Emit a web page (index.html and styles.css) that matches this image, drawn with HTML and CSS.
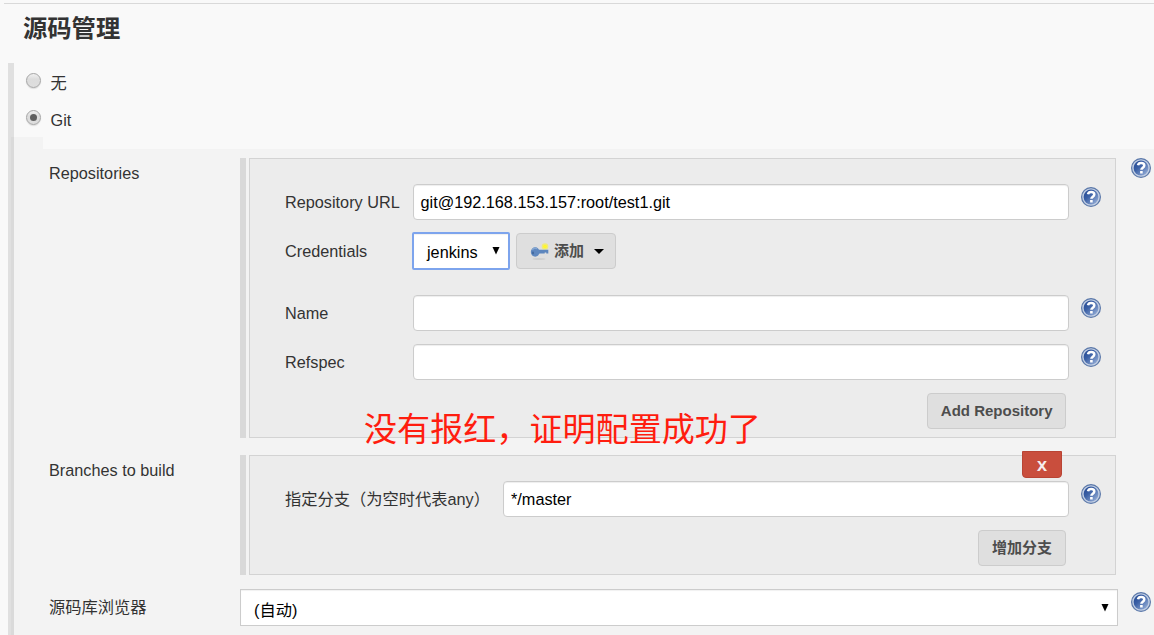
FILE: index.html
```html
<!DOCTYPE html>
<html lang="zh-CN">
<head>
<meta charset="utf-8">
<title>源码管理</title>
<link rel="stylesheet" href="styles.css">
</head>
<body>
<svg class="defs" aria-hidden="true">
  <defs>
    <linearGradient id="disc" x1="0" y1="0" x2="1" y2="1">
      <stop offset="0" stop-color="#1f4490"/><stop offset=".4" stop-color="#3c61a6"/><stop offset="1" stop-color="#a3b9de"/>
    </linearGradient>
    <symbol id="help" viewBox="0 0 20 20">
      <circle cx="10" cy="10" r="9.4" fill="#c1cee3" stroke="#5b78a9" stroke-width="1.2"/>
      <circle cx="10" cy="10" r="7.4" fill="url(#disc)"/>
      <path d="M7 7.2Q7.4 4.9 10.2 4.9q3.1 0 3.1 2.5c0 2.3-2.9 2.2-2.9 4.4" fill="none" stroke="#fff" stroke-width="2.5"/>
      <rect x="9.1" y="13" width="2.6" height="2.5" fill="#fff"/>
    </symbol>
  </defs>
</svg>
<main class="page">
  <h1 class="title">源码管理</h1>
  <section class="scm">
    <div class="choices">
      <label class="choice"><span class="radio"></span><span class="choice-text">无</span></label>
      <label class="choice"><span class="radio checked"></span><span class="choice-text">Git</span></label>
    </div>
    <div class="tab"></div>
    <div class="git">
      <div class="setting repos">
        <div class="setting-label">Repositories</div>
        <div class="group">
          <div class="panel">
            <div class="field"><span class="label">Repository URL</span><div class="input">git@192.168.153.157:root/test1.git</div><svg class="help"><use href="#help"/></svg></div>
            <div class="field credentials"><span class="label">Credentials</span>
              <div class="select focused"><span>jenkins</span><svg class="arrow" viewBox="0 0 8 8"><path d="M0.5 0h7L4 7.5z"/></svg></div>
              <button class="button add"><svg class="key" viewBox="0 0 20 20">
                <ellipse cx="9" cy="18" rx="6.5" ry="1" fill="#cfcfcf"/>
                <circle cx="15" cy="5.5" r="3.3" fill="#f0ea7a"/><circle cx="15" cy="5.5" r="1.8" fill="#fff72b"/>
                <path d="M8 8.7h10.3v3.8h-2v-1h-1.6v1H8z" fill="#5d86bd"/>
                <ellipse cx="5.2" cy="11" rx="4.4" ry="4.7" fill="#5f88bf"/><path d="M2.4 8.8q2-2.6 4.6-1" fill="none" stroke="#88a9d4" stroke-width="1.3"/>
                <ellipse cx="3" cy="12" rx="1" ry="1.4" fill="#42699f"/>
              </svg><span>添加</span><svg class="caret" viewBox="0 0 10 5"><path d="M0 0h10L5 5z"/></svg></button>
            </div>
            <div class="field name"><span class="label">Name</span><div class="input"></div><svg class="help"><use href="#help"/></svg></div>
            <div class="field"><span class="label">Refspec</span><div class="input"></div><svg class="help"><use href="#help"/></svg></div>
            <div class="actions"><button class="button">Add Repository</button></div>
          </div>
        </div>
        <svg class="help"><use href="#help"/></svg>
      </div>
      <div class="setting branches">
        <div class="setting-label">Branches to build</div>
        <div class="group">
          <div class="panel">
            <button class="delete">X</button>
            <div class="field"><span class="label wide">指定分支（为空时代表any）</span><div class="input">*/master</div><svg class="help"><use href="#help"/></svg></div>
            <div class="actions"><button class="button">增加分支</button></div>
          </div>
        </div>
      </div>
      <div class="setting browser">
        <div class="setting-label">源码库浏览器</div>
        <div class="select"><span>(自动)</span><svg class="arrow" viewBox="0 0 8 8"><path d="M0.5 0h7L4 7.5z"/></svg></div>
        <svg class="help"><use href="#help"/></svg>
      </div>
    </div>
  </section>
  <div class="note">没有报红，证明配置成功了</div>
</main>
</body>
</html>
```
FILE: styles.css
```css
* { box-sizing: border-box; }
body {
  margin: 0;
  background: #f9f9f9;
  color: #333;
  font: 16.25px/20px "Liberation Sans", "Noto Sans CJK SC", sans-serif;
}
.defs { position: absolute; width: 0; height: 0; }
.page { position: relative; height: 635px; padding-top: 3px; overflow: hidden; }
.page::before { content: ""; display: block; height: 1px; margin-left: 4px; background: #d9d9d9; }
.title { height: 59px; margin: 0; padding: 10px 0 0 23px; font-size: 24.3px; line-height: 30px; }
.scm { height: 572px; margin-left: 8px; border-left: 6px solid #e0e0e0; }
.choices { height: 74px; padding: 10px 0 0 12px; }
.choice { display: flex; height: 37px; }
.radio {
  display: grid; place-items: center; width: 15px; height: 15px;
  border: 1px solid #a5a5a5; border-radius: 50%;
  background: linear-gradient(#f0f0f0, #dcdcdc 40%, #dedede);
  box-shadow: 0 1px 1px #ddd;
}
.checked::after { content: ""; width: 7px; height: 7px; border-radius: 50%; background: #5f5f5f; }
.choice-text { padding: 0 0 0 9.5px; }
.tab { width: 32px; height: 12px; margin-left: -3px; background: rgba(0, 0, 0, .024); }
.git { height: 486px; margin-left: -3px; padding-top: 9px; background: rgba(0, 0, 0, .024); }
.setting { display: flex; align-items: flex-start; padding-left: 38px; }
.setting-label { width: 191px; padding-top: 5px; }
.repos { height: 297px; }
.branches { height: 134px; }
.group { width: 876px; padding-left: 3px; border-left: 6px solid #d9d9d9; }
.panel { width: 867px; padding-left: 35px; border: 1px solid #d3d3d3; background: #ececec; }
.repos .panel { height: 280px; padding-top: 25px; }
.branches .panel { position: relative; height: 120px; padding-top: 25px; }
.help { flex: none; width: 20px; height: 20px; }
.repos > .help { margin-left: 15px; }
.field { display: flex; height: 49px; align-items: flex-start; }
.label { flex: none; width: 128px; padding-top: 8px; }
.wide { width: 218px; }
.input {
  width: 656px; height: 36px; padding: 7px 6.5px; border: 1px solid #ccc; border-radius: 4px;
  background: #fff; box-shadow: inset 0 1px 1px rgba(0, 0, 0, .07); color: #000; line-height: 20px;
}
.wide + .input { width: 566px; padding-left: 7px; }
.field .help { margin: 3px 0 0 12px; }
.credentials { height: 62px; }
.select {
  display: flex; justify-content: space-between; height: 37px; padding: 10px 8px 0 13px;
  border: 1px solid #ccc; background: #fff; box-shadow: inset 0 1px 1px rgba(0, 0, 0, .06); color: #000;
}
.focused { width: 98px; height: 38px; margin: -1px 6px 0 -1px; padding-top: 8px; border: 2px solid #7da4ed; border-radius: 2px; }
.arrow { width: 8px; height: 8px; margin-top: 4px; }
.focused .arrow { margin-top: 5px; }
.button {
  height: 36px; padding: 0 12.5px; border: 1px solid #ccc; border-radius: 4px; background: #dfdfdf;
  color: #4d4d4d; font: bold 15px/20px "Liberation Sans", "Noto Sans CJK SC", sans-serif;
}
.branches .button { padding: 0 13px; }
.add { display: flex; align-items: center; width: 100px; padding: 0 11px 0 13px; }
.key { width: 20px; height: 20px; margin-right: 4px; }
.caret { width: 10px; height: 5px; margin-left: auto; }
.actions { display: flex; width: 781px; justify-content: flex-end; }
.delete {
  position: absolute; top: -5px; right: 53px; width: 40px; height: 27px; padding: 0;
  border: 1px solid #b94434; border-radius: 0 0 4px 4px; background: #c94e3d;
  color: #f5eeee; font: bold 15px/20px "Noto Sans", sans-serif;
}
.browser .setting-label { padding-top: 8px; }
.browser .select { width: 878px; }
.browser .help { margin: 3px 0 0 13px; }
.note {
  position: absolute; left: 364px; top: 408px; color: #ff1d0f;
  font-size: 33.1px; line-height: 44px; white-space: nowrap;
}
```
